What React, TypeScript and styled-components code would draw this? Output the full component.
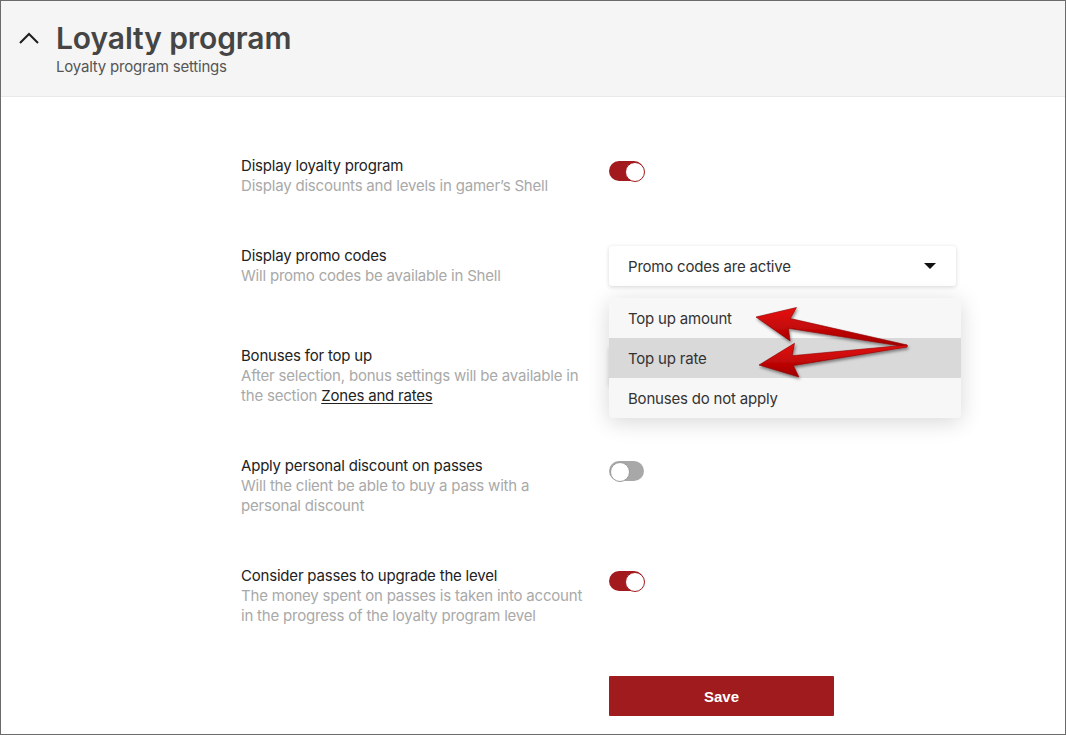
import styled, { createGlobalStyle } from 'styled-components';

const GlobalStyle = createGlobalStyle`
  html, body {
    margin: 0;
    padding: 0;
    background: #ffffff;
  }
  * {
    box-sizing: border-box;
  }
`;

const Frame = styled.div`
  position: relative;
  width: 1066px;
  height: 735px;
  border: 1px solid #6b6b6b;
  overflow: hidden;
  font-family: Inter, "Noto Sans", sans-serif;
  background: #ffffff;
`;

const Header = styled.div`
  display: flex;
  align-items: flex-start;
  gap: 16px;
  height: 96px;
  padding: 18px 0 0 17px;
  background: #f5f5f5;
  border-bottom: 1px solid #e9e9e9;
`;

const Chevron = styled.svg`
  width: 22px;
  height: 14px;
  margin-top: 12px;
  flex-shrink: 0;
`;

const Titles = styled.div`
  display: flex;
  flex-direction: column;
`;

const Title = styled.h1`
  margin: 0;
  font-size: 30px;
  line-height: 38px;
  font-weight: 600;
  color: #454545;
  letter-spacing: -0.1px;
`;

const Subtitle = styled.div`
  font-size: 15px;
  line-height: 20px;
  color: #555555;
  letter-spacing: -0.2px;
`;

const Body = styled.div`
  display: flex;
  flex-direction: column;
  gap: 50px;
  padding: 59px 0 0 240px;
`;

const Row = styled.div<{ $spaced?: boolean }>`
  display: grid;
  grid-template-columns: 350px 352px;
  column-gap: 18px;
  margin-top: ${(p) => (p.$spaced ? '10px' : '0')};
`;

const Label = styled.div`
  font-size: 15px;
  line-height: 20px;
  letter-spacing: -0.2px;
`;

const LabelTitle = styled.div`
  color: #222222;
`;

const Hint = styled.div`
  color: #a9a9a9;
`;

const Link = styled.a`
  color: #222222;
  text-decoration: underline;
  text-underline-offset: 2px;
`;

const Control = styled.div`
  position: relative;
`;

const Toggle = styled.div<{ $on?: boolean }>`
  position: relative;
  width: 35px;
  height: 20px;
  margin-top: 5px;
  border-radius: 10px;
  background: ${(p) => (p.$on ? '#a31a1e' : '#a8a8a8')};

  &::after {
    content: '';
    position: absolute;
    top: 1px;
    left: ${(p) => (p.$on ? '16px' : '1px')};
    width: 18px;
    height: 18px;
    border-radius: 50%;
    background: #ffffff;
    border: 1px solid ${(p) => (p.$on ? '#a31a1e' : '#9a9a9a')};
  }
`;

const Select = styled.div`
  display: flex;
  align-items: center;
  justify-content: space-between;
  width: 347px;
  height: 40px;
  padding: 0 20px 0 19px;
  background: #ffffff;
  border-radius: 3px;
  box-shadow: 0 1px 4px rgba(0, 0, 0, 0.16);
  font-size: 15px;
  letter-spacing: -0.2px;
  color: #333333;
`;

const Caret = styled.span`
  width: 0;
  height: 0;
  margin-left: auto;
  border-left: 6px solid transparent;
  border-right: 6px solid transparent;
  border-top: 6px solid #111111;
`;

const Menu = styled.div`
  position: absolute;
  top: -48px;
  left: 0;
  width: 352px;
  background: #f7f7f7;
  border-radius: 4px;
  box-shadow: 0 4px 22px rgba(0, 0, 0, 0.16);
  overflow: hidden;
  z-index: 2;
`;

const MenuItem = styled.div<{ $active?: boolean }>`
  height: 40px;
  display: flex;
  align-items: center;
  padding-left: 19px;
  font-size: 15px;
  letter-spacing: -0.2px;
  color: #333333;
  background: ${(p) => (p.$active ? '#d9d9d9' : 'transparent')};
`;

const SaveButton = styled.button`
  margin-left: 368px;
  width: 225px;
  height: 40px;
  border: none;
  border-radius: 1px;
  background: #a01b1e;
  color: #ffffff;
  font-family: "Liberation Sans", Arial, sans-serif;
  font-weight: 700;
  font-size: 15px;
  cursor: pointer;
`;

const Annotation = styled.svg`
  position: absolute;
  left: 0;
  top: 0;
  width: 1066px;
  height: 735px;
  pointer-events: none;
  z-index: 5;
`;

// builds a tapered arrow polygon from tail to tip
const arrowPoints = (tx: number, ty: number, hx: number, hy: number) => {
  const dx = hx - tx;
  const dy = hy - ty;
  const len = Math.hypot(dx, dy);
  const ux = dx / len;
  const uy = dy / len;
  const nx = -uy;
  const ny = ux;
  const headLen = 34;
  const headW = 17;
  const shaftW = 5;
  const tailW = 1;
  const bx = hx - ux * headLen;
  const by = hy - uy * headLen;
  const pts = [
    [tx + nx * tailW, ty + ny * tailW],
    [bx + nx * shaftW, by + ny * shaftW],
    [bx + nx * headW - ux * 4, by + ny * headW - uy * 4],
    [hx, hy],
    [bx - nx * headW - ux * 4, by - ny * headW - uy * 4],
    [bx - nx * shaftW, by - ny * shaftW],
    [tx - nx * tailW, ty - ny * tailW],
  ];
  return pts.map((p) => `${p[0].toFixed(1)},${p[1].toFixed(1)}`).join(' ');
};

export default function App() {
  return (
    <>
      <GlobalStyle />
      <Frame>
        <Header>
          <Chevron viewBox="0 0 22 14">
            <polyline points="2,12 11,3 20,12" fill="none" stroke="#1e1e1e" strokeWidth="2" />
          </Chevron>
          <Titles>
            <Title>Loyalty program</Title>
            <Subtitle>Loyalty program settings</Subtitle>
          </Titles>
        </Header>

        <Body>
          <Row>
            <Label>
              <LabelTitle>Display loyalty program</LabelTitle>
              <Hint>Display discounts and levels in gamer’s Shell</Hint>
            </Label>
            <Control>
              <Toggle $on />
            </Control>
          </Row>

          <Row>
            <Label>
              <LabelTitle>Display promo codes</LabelTitle>
              <Hint>Will promo codes be available in Shell</Hint>
            </Label>
            <Control>
              <Select>
                Promo codes are active
                <Caret />
              </Select>
            </Control>
          </Row>

          <Row $spaced>
            <Label>
              <LabelTitle>Bonuses for top up</LabelTitle>
              <Hint>
                After selection, bonus settings will be available in the section{' '}
                <Link>Zones and rates</Link>
              </Hint>
            </Label>
            <Control>
              <Select>
                <Caret />
              </Select>
              <Menu>
                <MenuItem>Top up amount</MenuItem>
                <MenuItem $active>Top up rate</MenuItem>
                <MenuItem>Bonuses do not apply</MenuItem>
              </Menu>
            </Control>
          </Row>

          <Row>
            <Label>
              <LabelTitle>Apply personal discount on passes</LabelTitle>
              <Hint>Will the client be able to buy a pass with a personal discount</Hint>
            </Label>
            <Control>
              <Toggle />
            </Control>
          </Row>

          <Row>
            <Label>
              <LabelTitle>Consider passes to upgrade the level</LabelTitle>
              <Hint>
                The money spent on passes is taken into account in the progress of the loyalty program level
              </Hint>
            </Label>
            <Control>
              <Toggle $on />
            </Control>
          </Row>

          <SaveButton>Save</SaveButton>
        </Body>

        <Annotation viewBox="0 0 1066 735">
          <defs>
            <linearGradient id="arrowFill" x1="0" y1="0" x2="0" y2="1">
              <stop offset="0" stopColor="#e80f0f" />
              <stop offset="1" stopColor="#a00000" />
            </linearGradient>
            <filter id="arrowShadow" x="-20%" y="-50%" width="140%" height="200%">
              <feDropShadow dx="1" dy="2" stdDeviation="1.5" floodColor="#000" floodOpacity="0.45" />
            </filter>
          </defs>
          <g filter="url(#arrowShadow)" fill="url(#arrowFill)" stroke="#8a0000" strokeWidth="0.6" strokeLinejoin="round">
            <polygon points={arrowPoints(906, 345, 755, 316)} />
            <polygon points={arrowPoints(906, 345, 758, 364)} />
          </g>
        </Annotation>
      </Frame>
    </>
  );
}
